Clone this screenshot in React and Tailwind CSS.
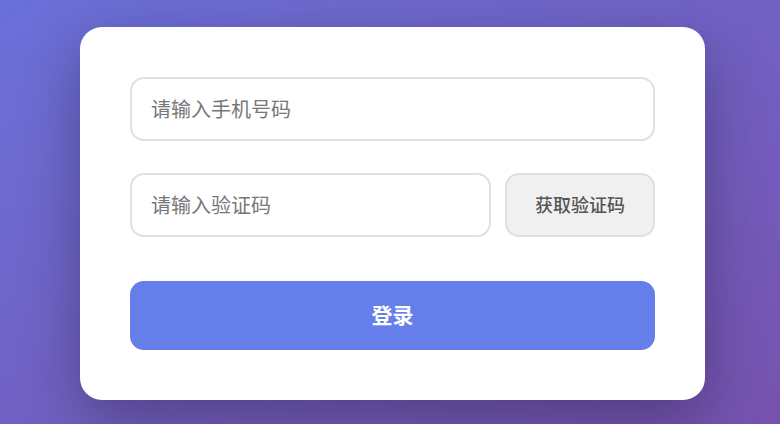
export default function App() {
  return (
    <div
      className="min-h-screen w-full flex items-center justify-center bg-gradient-to-br from-[#6a70d9] to-[#7652af]"
      style={{ fontFamily: '"Noto Sans CJK SC", "Noto Sans", sans-serif' }}
    >
      <div className="w-[625px] mt-[2px] ml-[5px] bg-white rounded-[22px] p-[50px] shadow-[0_20px_60px_rgba(0,0,0,0.3)]">
        {/* Phone */}
        <input
          type="text"
          placeholder="请输入手机号码"
          className="block w-full h-[64px] border-2 border-[#e0e0e0] rounded-[14px] pl-[19px] text-[20px] text-[#333] placeholder:text-[#777] outline-none"
        />

        {/* Code row */}
        <div className="flex gap-[14px] mt-[32px]">
          <input
            type="text"
            placeholder="请输入验证码"
            className="flex-1 min-w-0 h-[64px] border-2 border-[#e0e0e0] rounded-[14px] pl-[19px] text-[20px] text-[#333] placeholder:text-[#777] outline-none"
          />
          <button className="w-[150px] h-[64px] bg-[#f0f0f0] border-2 border-[#e0e0e0] rounded-[14px] text-[18px] font-medium text-[#555]">
            获取验证码
          </button>
        </div>

        {/* Submit */}
        <button className="w-full h-[69px] mt-[44px] bg-[#667eea] rounded-[14px] text-white text-[21px] font-bold">
          登录
        </button>
      </div>
    </div>
  );
}
